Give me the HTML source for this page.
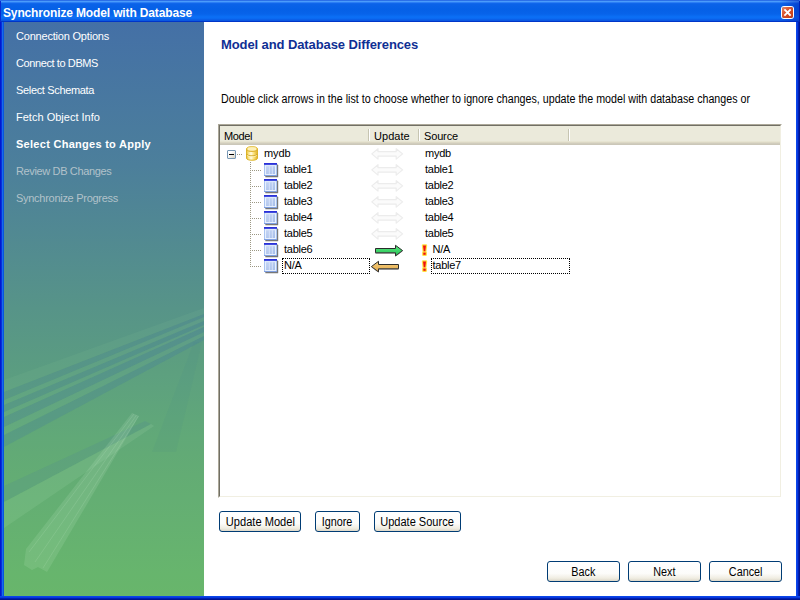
<!DOCTYPE html>
<html>
<head>
<meta charset="utf-8">
<title>Synchronize Model with Database</title>
<style>
html,body{margin:0;padding:0;}
body{width:800px;height:600px;overflow:hidden;background:#fff;position:relative;font-family:"Liberation Sans",sans-serif;font-size:11px;color:#000;}
.abs{position:absolute;}
#titlebar{left:0;top:0;width:800px;height:22px;background:linear-gradient(to bottom,#2a6fe8 0,#2a6fe8 1px,#4a9cfb 1px,#4a9cfb 2px,#2c7ef4 2px,#2c7ef4 3px,#1268ec 3px,#0a62e8 4.5px,#0560e6 9px,#0763ea 14px,#0b70f6 17px,#0a68f0 19px,#0a58e2 20px,#0a58e2 21px,#0035c8 21px,#0035c8 22px);}
#title{left:3px;top:5px;color:#fff;font-weight:bold;font-size:12px;line-height:16px;white-space:nowrap;letter-spacing:-0.14px;}
#bl{left:0;top:22px;width:4px;height:578px;background:linear-gradient(to right,#0019cf 0,#0019cf 1px,#0a2fd8 1px,#0a2fd8 2px,#166aee 2px,#166aee 3px,#0855dd 3px,#0855dd 4px);}
#br{left:796px;top:22px;width:4px;height:578px;background:linear-gradient(to right,#0a46ea 0,#0a46ea 1px,#083ade 1px,#083ade 2px,#0020b4 2px,#0020b4 3px,#001590 3px,#001590 4px);}
#bb{left:0;top:596px;width:800px;height:4px;background:linear-gradient(to bottom,#0a46ea 0,#0a46ea 1px,#083ade 1px,#083ade 2px,#0020b4 2px,#0020b4 3px,#001590 3px,#001590 4px);}
#close{z-index:2;left:782px;top:7px;width:11px;height:11px;border-radius:2px;background:linear-gradient(135deg,#e88a6a 0%,#d9532c 40%,#c03a14 100%);box-shadow:0 0 0 1px #fff;}
#side{left:4px;top:22px;width:200px;height:574px;}
.step{left:16px;color:#fff;font-size:11px;line-height:14px;white-space:nowrap;}
.step.dis{color:#b2c2ca;}
.step.cur{font-weight:bold;}
#heading{left:221px;top:37px;font-size:13px;line-height:16px;font-weight:bold;color:#0f2f94;white-space:nowrap;letter-spacing:-0.1px;}
#desc{left:221px;top:92px;font-size:12px;line-height:14px;white-space:nowrap;transform:scaleX(0.89);transform-origin:0 0;}
#list{left:218px;top:124px;width:560px;height:370px;border-style:solid;border-width:2px;border-color:#aca899 #fff #fff #aca899;background:#fff;}
#list .inner{left:-1px;top:-1px;width:560px;height:370px;border-style:solid;border-width:1px;border-color:#716f64 #f1efe2 #f1efe2 #716f64;}
#hdr{left:220px;top:126px;width:560px;height:19px;background:linear-gradient(to bottom,#ebeadb 0,#ebeadb 15px,#e2dec8 16px,#d6d2c2 17px,#cbc7b8 18px,#cbc7b8 19px);}
.hsep{top:129px;width:1px;height:12px;background:#c7c5b2;box-shadow:1px 0 0 #fff;}
.ht{top:129px;line-height:14px;white-space:nowrap;letter-spacing:-0.4px;margin-left:-1px;}
.t{line-height:14px;white-space:nowrap;}
.btn{box-sizing:border-box;height:21px;border:1px solid #003c74;border-radius:3px;background:linear-gradient(to bottom,#fff 0,#fcfcfa 60%,#f0ede2 85%,#dcd7c8 100%);text-align:center;line-height:21px;white-space:nowrap;font-size:12px;}
.btn span{display:inline-block;transform:scaleX(0.9);}
.tt{letter-spacing:-0.25px;}
.dotH{height:1px;background:repeating-linear-gradient(to right,#9c9884 0,#9c9884 1px,transparent 1px,transparent 2px);}
.dotV{width:1px;background:repeating-linear-gradient(to bottom,#9c9884 0,#9c9884 1px,transparent 1px,transparent 2px);}
.focus{border:1px dotted #000;}
</style>
</head>
<body>
<div id="titlebar" class="abs"></div>
<div id="title" class="abs">Synchronize Model with Database</div>
<div id="close" class="abs"><svg width="11" height="11" viewBox="0 0 11 11" style="display:block"><path d="M3 3 L8 8 M8 3 L3 8" stroke="#fff" stroke-width="1.8" stroke-linecap="square"/></svg></div>
<div class="abs" style="left:0;top:1px;width:1px;height:21px;background:#0a2ad0"></div><div class="abs" style="left:799px;top:1px;width:1px;height:21px;background:#0020b4"></div><div class="abs" style="left:780px;top:0;width:19px;height:22px;background:linear-gradient(to right,rgba(0,30,180,0),rgba(0,30,180,.45))"></div>
<div id="bl" class="abs"></div><div id="br" class="abs"></div><div id="bb" class="abs"></div>

<svg id="side" class="abs" width="200" height="574" viewBox="0 0 200 574">
<defs>
<linearGradient id="sg" x1="0" y1="0" x2="0" y2="1">
<stop offset="0" stop-color="#4470a6"/>
<stop offset="0.25" stop-color="#4c7f9b"/>
<stop offset="0.5" stop-color="#579488"/>
<stop offset="0.75" stop-color="#60a877"/>
<stop offset="1" stop-color="#66b56b"/>
</linearGradient>
<linearGradient id="tg" x1="0" y1="0" x2="1" y2="1"><stop offset="0" stop-color="#c6d6f4"/><stop offset="1" stop-color="#a6beea"/></linearGradient>
<linearGradient id="dg" x1="0" y1="0" x2="1" y2="0"><stop offset="0" stop-color="#e8bc30"/><stop offset=".2" stop-color="#fbe68c"/><stop offset=".42" stop-color="#fffbe2"/><stop offset=".68" stop-color="#fbe074"/><stop offset="1" stop-color="#dcae28"/></linearGradient>
<linearGradient id="gg" x1="0" y1="0" x2="0" y2="1"><stop offset="0" stop-color="#5cea82"/><stop offset="1" stop-color="#22c050"/></linearGradient>
<linearGradient id="og" x1="0" y1="0" x2="0" y2="1"><stop offset="0" stop-color="#f8d080"/><stop offset="1" stop-color="#e0a848"/></linearGradient>
</defs>
<rect width="200" height="574" fill="url(#sg)"/>
<g>
<polygon points="200,318 200,574 0,574 0,425" fill="#7ccf74" opacity=".08"/>
<polygon points="200,286 200,292 0,370 0,358" fill="#a8e8a8" opacity=".07"/>
<polygon points="200,292 200,295 0,378 0,370" fill="#3f6fb0" opacity=".13"/>
<polygon points="200,295 200,299 0,383 0,378" fill="#a8e8a8" opacity=".08"/>
<polygon points="200,299 200,303 0,390 0,383" fill="#3f6fb0" opacity=".16"/>
<polygon points="200,303 200,305 0,395 0,390" fill="#a8e8a8" opacity=".08"/>
<polygon points="200,305 200,310 0,405 0,395" fill="#3f6fb0" opacity=".17"/>
<polygon points="200,310 200,314 0,413 0,405" fill="#a8e8a8" opacity=".08"/>
<polygon points="200,314 200,318 0,425 0,413" fill="#3f6fb0" opacity=".16"/>
<polygon points="190,320 198,320 172,430 148,430" fill="#3f7f90" opacity=".08"/>
<polygon points="141,399 147,402 0,480 0,464" fill="#3f6fb0" opacity=".12"/>
<polygon points="147,402 150,404 0,506 0,480" fill="#d0f4d0" opacity=".10"/>
<polygon points="128,391 135,394 43,550 34,545 28,548 20,543 22,527" fill="#dcf6dc" opacity=".13"/>
<path d="M130 392 L25 530 M132.500 393 L31 540 M134.500 394 L39 546" stroke="#e8ffe8" stroke-width="1" opacity=".12" fill="none"/>
</g>
</svg>

<div class="abs step" style="top:29px;letter-spacing:-0.20px">Connection Options</div>
<div class="abs step" style="top:56px;letter-spacing:-0.40px">Connect to DBMS</div>
<div class="abs step" style="top:83px;letter-spacing:-0.34px">Select Schemata</div>
<div class="abs step" style="top:110px;letter-spacing:0.01px">Fetch Object Info</div>
<div class="abs step cur" style="top:137px;letter-spacing:0.28px">Select Changes to Apply</div>
<div class="abs step dis" style="top:164px;letter-spacing:-0.36px">Review DB Changes</div>
<div class="abs step dis" style="top:191px;letter-spacing:-0.28px">Synchronize Progress</div>

<div id="heading" class="abs">Model and Database Differences</div>
<div id="desc" class="abs">Double click arrows in the list to choose whether to ignore changes, update the model with database changes or</div>

<div id="list" class="abs"><div class="inner abs"></div></div>
<div id="hdr" class="abs"></div>
<div class="abs hsep" style="left:368px"></div>
<div class="abs hsep" style="left:418px"></div>
<div class="abs hsep" style="left:568px"></div>
<div class="abs ht" style="left:225px">Model</div>
<div class="abs ht" style="left:375px;letter-spacing:0.05px">Update</div>
<div class="abs ht" style="left:425px;letter-spacing:-0.15px">Source</div>

<div class="abs" style="left:227px;top:150px;width:7px;height:7px;border:1px solid #7898b5;border-radius:1px;background:linear-gradient(135deg,#fff 30%,#d8d2c0 100%)"></div>
<div class="abs" style="left:229px;top:154px;width:5px;height:1px;background:#000"></div>
<div class="abs dotH" style="left:237px;top:154px;width:6px"></div>
<div class="abs dotV" style="left:250px;top:162px;height:105px"></div>
<div class="abs dotH" style="left:252px;top:170px;width:10px"></div>
<div class="abs dotH" style="left:252px;top:186px;width:10px"></div>
<div class="abs dotH" style="left:252px;top:202px;width:10px"></div>
<div class="abs dotH" style="left:252px;top:218px;width:10px"></div>
<div class="abs dotH" style="left:252px;top:234px;width:10px"></div>
<div class="abs dotH" style="left:252px;top:250px;width:10px"></div>
<div class="abs dotH" style="left:252px;top:266px;width:10px"></div>
<svg class="abs" style="left:246px;top:146px" width="12" height="15" viewBox="0 0 12 15"><path d="M0.5 2.8 C0.5 0.1 11.5 0.1 11.5 2.8 V12.2 C11.5 14.9 0.5 14.9 0.5 12.2 Z" fill="url(#dg)" stroke="#dcb428" stroke-width="1"/><ellipse cx="6" cy="2.9" rx="5" ry="2.2" fill="#fdf0b8" stroke="#e8c548" stroke-width=".6"/><path d="M0.7 3.6 C1.2 6.2 10.8 6.2 11.3 3.6" fill="none" stroke="#dcb02c" stroke-width=".9"/><path d="M0.5 8 C1 10.5 11 10.5 11.5 8" fill="none" stroke="#cfa420" stroke-width="1"/><path d="M1.2 9.2 C2 11.2 10 11.2 10.8 9.2" fill="none" stroke="#fff6c4" stroke-width=".8"/></svg>
<div class="abs t tt" style="left:264px;top:146px;letter-spacing:-0.1px">mydb</div>
<svg class="abs" style="left:371px;top:148px" width="33" height="12" viewBox="0 0 33 12"><path d="M0.8 5.9 L7 0.7 V3.6 H25.2 V0.7 L31.6 5.9 L25.2 11.1 V8.2 H7 V11.1 Z" fill="#fbfbfb" stroke="#ececec" stroke-width="1.2" stroke-linejoin="round"/></svg>
<div class="abs t tt" style="left:425px;top:146px">mydb</div>
<svg class="abs" style="left:264px;top:163px" width="15" height="15" viewBox="0 0 15 15"><rect x="1.3" y="1.6" width="12.9" height="12.7" rx=".6" fill="#4a4a4a" opacity=".75"/><rect x="0" y="0" width="13" height="13" fill="#a9c4f2"/><rect x="0" y="12" width="13" height="1" fill="#7f9fe0"/><rect x="0" y="0" width="13" height="1.8" fill="#2a30d8"/><rect x="1" y="2.2" width="11" height="9.8" fill="#e9f1fd"/><rect x="2" y="3.2" width="9" height="7.8" fill="url(#tg)"/><path d="M5.3 3.2 V11 M8.3 3.2 V11" stroke="#dfe9fb" stroke-width=".8"/></svg>
<div class="abs t tt" style="left:284px;top:162px">table1</div>
<svg class="abs" style="left:371px;top:164px" width="33" height="12" viewBox="0 0 33 12"><path d="M0.8 5.9 L7 0.7 V3.6 H25.2 V0.7 L31.6 5.9 L25.2 11.1 V8.2 H7 V11.1 Z" fill="#fbfbfb" stroke="#ececec" stroke-width="1.2" stroke-linejoin="round"/></svg>
<div class="abs t tt" style="left:425px;top:162px">table1</div>
<svg class="abs" style="left:264px;top:179px" width="15" height="15" viewBox="0 0 15 15"><rect x="1.3" y="1.6" width="12.9" height="12.7" rx=".6" fill="#4a4a4a" opacity=".75"/><rect x="0" y="0" width="13" height="13" fill="#a9c4f2"/><rect x="0" y="12" width="13" height="1" fill="#7f9fe0"/><rect x="0" y="0" width="13" height="1.8" fill="#2a30d8"/><rect x="1" y="2.2" width="11" height="9.8" fill="#e9f1fd"/><rect x="2" y="3.2" width="9" height="7.8" fill="url(#tg)"/><path d="M5.3 3.2 V11 M8.3 3.2 V11" stroke="#dfe9fb" stroke-width=".8"/></svg>
<div class="abs t tt" style="left:284px;top:178px">table2</div>
<svg class="abs" style="left:371px;top:180px" width="33" height="12" viewBox="0 0 33 12"><path d="M0.8 5.9 L7 0.7 V3.6 H25.2 V0.7 L31.6 5.9 L25.2 11.1 V8.2 H7 V11.1 Z" fill="#fbfbfb" stroke="#ececec" stroke-width="1.2" stroke-linejoin="round"/></svg>
<div class="abs t tt" style="left:425px;top:178px">table2</div>
<svg class="abs" style="left:264px;top:195px" width="15" height="15" viewBox="0 0 15 15"><rect x="1.3" y="1.6" width="12.9" height="12.7" rx=".6" fill="#4a4a4a" opacity=".75"/><rect x="0" y="0" width="13" height="13" fill="#a9c4f2"/><rect x="0" y="12" width="13" height="1" fill="#7f9fe0"/><rect x="0" y="0" width="13" height="1.8" fill="#2a30d8"/><rect x="1" y="2.2" width="11" height="9.8" fill="#e9f1fd"/><rect x="2" y="3.2" width="9" height="7.8" fill="url(#tg)"/><path d="M5.3 3.2 V11 M8.3 3.2 V11" stroke="#dfe9fb" stroke-width=".8"/></svg>
<div class="abs t tt" style="left:284px;top:194px">table3</div>
<svg class="abs" style="left:371px;top:196px" width="33" height="12" viewBox="0 0 33 12"><path d="M0.8 5.9 L7 0.7 V3.6 H25.2 V0.7 L31.6 5.9 L25.2 11.1 V8.2 H7 V11.1 Z" fill="#fbfbfb" stroke="#ececec" stroke-width="1.2" stroke-linejoin="round"/></svg>
<div class="abs t tt" style="left:425px;top:194px">table3</div>
<svg class="abs" style="left:264px;top:211px" width="15" height="15" viewBox="0 0 15 15"><rect x="1.3" y="1.6" width="12.9" height="12.7" rx=".6" fill="#4a4a4a" opacity=".75"/><rect x="0" y="0" width="13" height="13" fill="#a9c4f2"/><rect x="0" y="12" width="13" height="1" fill="#7f9fe0"/><rect x="0" y="0" width="13" height="1.8" fill="#2a30d8"/><rect x="1" y="2.2" width="11" height="9.8" fill="#e9f1fd"/><rect x="2" y="3.2" width="9" height="7.8" fill="url(#tg)"/><path d="M5.3 3.2 V11 M8.3 3.2 V11" stroke="#dfe9fb" stroke-width=".8"/></svg>
<div class="abs t tt" style="left:284px;top:210px">table4</div>
<svg class="abs" style="left:371px;top:212px" width="33" height="12" viewBox="0 0 33 12"><path d="M0.8 5.9 L7 0.7 V3.6 H25.2 V0.7 L31.6 5.9 L25.2 11.1 V8.2 H7 V11.1 Z" fill="#fbfbfb" stroke="#ececec" stroke-width="1.2" stroke-linejoin="round"/></svg>
<div class="abs t tt" style="left:425px;top:210px">table4</div>
<svg class="abs" style="left:264px;top:227px" width="15" height="15" viewBox="0 0 15 15"><rect x="1.3" y="1.6" width="12.9" height="12.7" rx=".6" fill="#4a4a4a" opacity=".75"/><rect x="0" y="0" width="13" height="13" fill="#a9c4f2"/><rect x="0" y="12" width="13" height="1" fill="#7f9fe0"/><rect x="0" y="0" width="13" height="1.8" fill="#2a30d8"/><rect x="1" y="2.2" width="11" height="9.8" fill="#e9f1fd"/><rect x="2" y="3.2" width="9" height="7.8" fill="url(#tg)"/><path d="M5.3 3.2 V11 M8.3 3.2 V11" stroke="#dfe9fb" stroke-width=".8"/></svg>
<div class="abs t tt" style="left:284px;top:226px">table5</div>
<svg class="abs" style="left:371px;top:228px" width="33" height="12" viewBox="0 0 33 12"><path d="M0.8 5.9 L7 0.7 V3.6 H25.2 V0.7 L31.6 5.9 L25.2 11.1 V8.2 H7 V11.1 Z" fill="#fbfbfb" stroke="#ececec" stroke-width="1.2" stroke-linejoin="round"/></svg>
<div class="abs t tt" style="left:425px;top:226px">table5</div>
<svg class="abs" style="left:264px;top:243px" width="15" height="15" viewBox="0 0 15 15"><rect x="1.3" y="1.6" width="12.9" height="12.7" rx=".6" fill="#4a4a4a" opacity=".75"/><rect x="0" y="0" width="13" height="13" fill="#a9c4f2"/><rect x="0" y="12" width="13" height="1" fill="#7f9fe0"/><rect x="0" y="0" width="13" height="1.8" fill="#2a30d8"/><rect x="1" y="2.2" width="11" height="9.8" fill="#e9f1fd"/><rect x="2" y="3.2" width="9" height="7.8" fill="url(#tg)"/><path d="M5.3 3.2 V11 M8.3 3.2 V11" stroke="#dfe9fb" stroke-width=".8"/></svg>
<div class="abs t tt" style="left:284px;top:242px">table6</div>
<svg class="abs" style="left:420px;top:243px" width="9" height="14" viewBox="0 0 9 14"><g stroke="#ffe040" stroke-width="2.4" stroke-linejoin="round" fill="#ffe040"><path d="M3 2.4 H6 L5.3 8.2 H3.7 Z"/><rect x="3.3" y="9.6" width="2.4" height="2.2"/></g><path d="M3 2.4 H6 L5.3 8.2 H3.7 Z" fill="#f01010"/><rect x="3.3" y="9.6" width="2.4" height="2.2" fill="#f01010"/></svg>
<div class="abs t tt" style="left:432.5px;top:242px">N/A</div>
<svg class="abs" style="left:264px;top:259px" width="15" height="15" viewBox="0 0 15 15"><rect x="1.3" y="1.6" width="12.9" height="12.7" rx=".6" fill="#4a4a4a" opacity=".75"/><rect x="0" y="0" width="13" height="13" fill="#a9c4f2"/><rect x="0" y="12" width="13" height="1" fill="#7f9fe0"/><rect x="0" y="0" width="13" height="1.8" fill="#2a30d8"/><rect x="1" y="2.2" width="11" height="9.8" fill="#e9f1fd"/><rect x="2" y="3.2" width="9" height="7.8" fill="url(#tg)"/><path d="M5.3 3.2 V11 M8.3 3.2 V11" stroke="#dfe9fb" stroke-width=".8"/></svg>
<div class="abs t tt" style="left:284px;top:258px">N/A</div>
<svg class="abs" style="left:420px;top:259px" width="9" height="14" viewBox="0 0 9 14"><g stroke="#ffe040" stroke-width="2.4" stroke-linejoin="round" fill="#ffe040"><path d="M3 2.4 H6 L5.3 8.2 H3.7 Z"/><rect x="3.3" y="9.6" width="2.4" height="2.2"/></g><path d="M3 2.4 H6 L5.3 8.2 H3.7 Z" fill="#f01010"/><rect x="3.3" y="9.6" width="2.4" height="2.2" fill="#f01010"/></svg>
<div class="abs t tt" style="left:432.5px;top:258px">table7</div>
<svg class="abs" style="left:374px;top:244px" width="30" height="14" viewBox="0 0 30 14"><path d="M1.5 4.5 H21.5 V1.3 L28.6 6.6 L21.5 11.9 V8.8 H1.5 Z" fill="url(#gg)" stroke="#2b2b2b" stroke-width="1" stroke-linejoin="round"/><path d="M1.5 9.3 H21.5 M21.8 12 L28.4 7.1" stroke="#555" stroke-width=".8" opacity=".7" fill="none"/></svg>
<svg class="abs" style="left:370px;top:260px" width="30" height="14" viewBox="0 0 30 14"><path d="M28.5 4.5 H8.5 V1.3 L1.4 6.6 L8.5 11.9 V8.8 H28.5 Z" fill="url(#og)" stroke="#2b2b2b" stroke-width="1" stroke-linejoin="round"/><path d="M28.5 9.3 H8.5 M8.2 12 L1.6 7.1" stroke="#555" stroke-width=".8" opacity=".7" fill="none"/></svg>
<div class="abs focus" style="left:282px;top:258px;width:86px;height:14px"></div>
<div class="abs focus" style="left:431px;top:258px;width:137px;height:14px"></div>
<div class="abs btn" style="left:219px;top:511px;width:82px"><span style="transform:scaleX(.925)">Update Model</span></div>
<div class="abs btn" style="left:315px;top:511px;width:45px"><span>Ignore</span></div>
<div class="abs btn" style="left:374px;top:511px;width:87px"><span style="transform:scaleX(.92)">Update Source</span></div>
<div class="abs btn" style="left:547px;top:561px;width:73px"><span>Back</span></div>
<div class="abs btn" style="left:628px;top:561px;width:73px"><span>Next</span></div>
<div class="abs btn" style="left:709px;top:561px;width:73px"><span>Cancel</span></div>
</body>
</html>
